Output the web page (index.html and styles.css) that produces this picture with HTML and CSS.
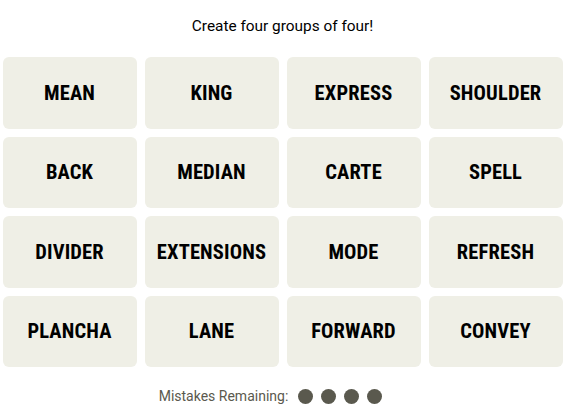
FILE: index.html
```html
<!DOCTYPE html>
<html lang="en">
<head>
    <meta charset="UTF-8">
    <meta name="viewport" content="width=device-width, initial-scale=1.0">
    <title>Connections</title>
    <link rel="stylesheet" href="styles.css">
</head>
<body>
    <div class="game">
        <p class="title">Create four groups of four!</p>

        <!-- Word Board -->
        <div class="board">
            <button class="tile">MEAN</button>
            <button class="tile">KING</button>
            <button class="tile">EXPRESS</button>
            <button class="tile">SHOULDER</button>
            <button class="tile">BACK</button>
            <button class="tile">MEDIAN</button>
            <button class="tile">CARTE</button>
            <button class="tile">SPELL</button>
            <button class="tile">DIVIDER</button>
            <button class="tile">EXTENSIONS</button>
            <button class="tile">MODE</button>
            <button class="tile">REFRESH</button>
            <button class="tile">PLANCHA</button>
            <button class="tile">LANE</button>
            <button class="tile">FORWARD</button>
            <button class="tile">CONVEY</button>
        </div>

        <!-- Mistakes -->
        <div class="mistakes">
            <span class="mistakes-label">Mistakes Remaining:</span>
            <span class="dots">
                <span class="dot"></span>
                <span class="dot"></span>
                <span class="dot"></span>
                <span class="dot"></span>
            </span>
        </div>
    </div>
</body>
</html>
```

FILE: styles.css
```css
body {
    margin: 0;
    background-color: #fff;
    color: #000;
    font-family: Roboto, 'Liberation Sans', sans-serif;
}

.game {
    width: 560px;
    margin: 0 auto;
}

.title {
    margin: 0;
    padding-top: 16px;
    font-size: 15.4px;
    line-height: 20px;
    text-align: center;
}

.board {
    margin-top: 21px;
    display: grid;
    grid-template-columns: repeat(4, 1fr);
    grid-auto-rows: 71.5px;
    gap: 8px;
}

.tile {
    border: none;
    border-radius: 6px;
    background-color: #efefe6;
    color: #000;
    font-family: 'Roboto Condensed', Roboto, sans-serif;
    font-weight: 700;
    font-size: 20.5px;
    letter-spacing: 0.15px;
    padding: 0;
    cursor: pointer;
}

.mistakes {
    margin-top: 21px;
    padding-right: 24px;
    height: 16px;
    display: flex;
    align-items: center;
    justify-content: center;
    gap: 10px;
}

.mistakes-label {
    font-size: 14px;
    color: #5a594e;
}

.dots {
    display: flex;
    gap: 8px;
}

.dot {
    width: 15px;
    height: 15px;
    border-radius: 50%;
    background-color: #5a594e;
}
```
